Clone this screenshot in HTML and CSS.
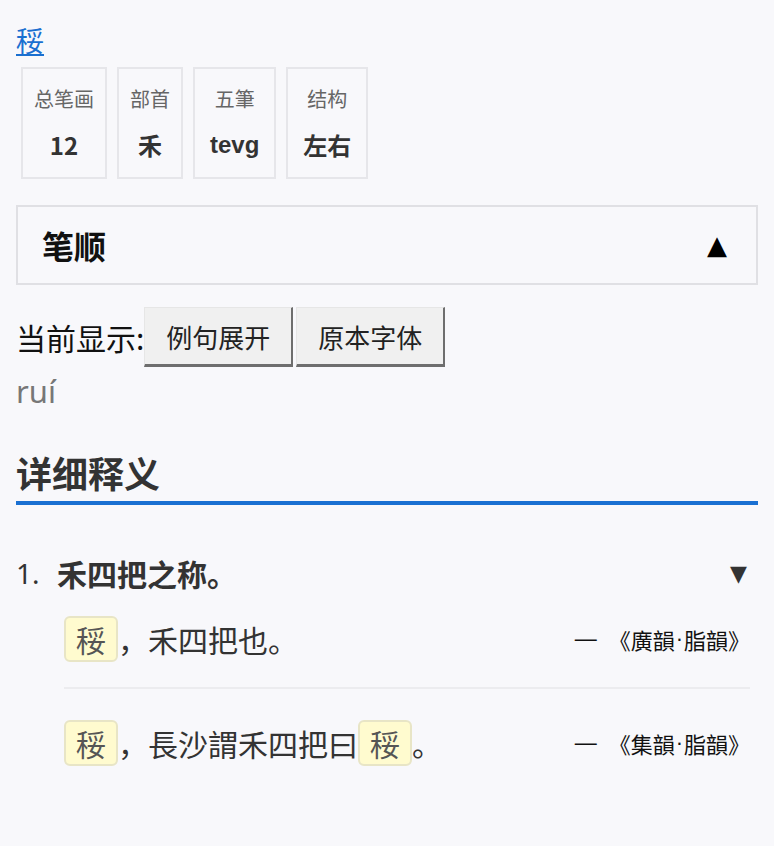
FILE: index.html
```html
<!DOCTYPE html>
<html lang="zh">
<head>
<meta charset="utf-8">
<link rel="stylesheet" href="styles.css">
</head>
<body>
<div class="page">
  <a class="char-link" href="#">䅑</a>
  <div class="cards">
    <div class="card"><div class="card-label">总笔画</div><div class="card-value">12</div></div>
    <div class="card"><div class="card-label">部首</div><div class="card-value">禾</div></div>
    <div class="card"><div class="card-label">五筆</div><div class="card-value latin">tevg</div></div>
    <div class="card"><div class="card-label">结构</div><div class="card-value">左右</div></div>
  </div>
  <div class="stroke-box">
    <span class="stroke-title">笔顺</span>
    <span class="stroke-arrow">▲</span>
  </div>
  <div class="display-row">
    <span class="display-label">当前显示:</span><button class="btn">例句展开</button><button class="btn">原本字体</button>
  </div>
  <div class="pinyin">ruí</div>
  <h2 class="section-title">详细释义</h2>
  <div class="def-row">
    <span class="def-num">1.</span>
    <span class="def-text">禾四把之称。</span>
    <span class="def-arrow">▼</span>
  </div>
  <div class="examples">
    <div class="example">
      <div class="ex-text"><span class="hl">䅑</span>，禾四把也。</div>
      <div class="ex-src"><span class="dash">—</span>《廣韻<span class="dot">·</span>脂韻》</div>
    </div>
    <div class="example">
      <div class="ex-text"><span class="hl">䅑</span>，長沙謂禾四把曰<span class="hl">䅑</span>。</div>
      <div class="ex-src"><span class="dash">—</span>《集韻<span class="dot">·</span>脂韻》</div>
    </div>
  </div>
</div>
</body>
</html>
```
FILE: styles.css
```css
* { box-sizing: border-box; }
html, body { margin: 0; padding: 0; }
body {
  background: #f8f8fb;
  color: #333;
  font-family: "Noto Sans CJK SC", "Noto Sans", sans-serif;
}
.page {
  padding: 22px 16px 0 16px;
}
.char-link {
  display: inline-block;
  font-size: 28px;
  line-height: 36px;
  color: #1a6fd0;
  text-decoration: underline;
}
.cards {
  display: flex;
  margin-top: 9px;
}
.card {
  margin: 0 5px;
  padding: 15px 11px 14px;
  border: 2px solid #e6e6ea;
  display: flex;
  flex-direction: column;
  align-items: center;
  gap: 13px;
}
.card-label {
  font-size: 20px;
  line-height: 30px;
  color: #666;
}
.card-value {
  font-size: 24px;
  line-height: 36px;
  font-weight: bold;
  color: #333;
  padding: 0 4px;
}
.card-value.latin {
  font-family: "Liberation Sans", "Noto Sans", sans-serif;
}
.stroke-box {
  margin-top: 26px;
  height: 80px;
  border: 2px solid #e0e0e4;
  display: flex;
  align-items: center;
  justify-content: space-between;
  padding: 0 29px 0 24px;
}
.stroke-title {
  font-size: 32px;
  font-weight: bold;
  color: #111;
}
.stroke-arrow {
  font-size: 26px;
  color: #000;
  font-family: "DejaVu Sans", sans-serif;
}
.display-row {
  margin-top: 22px;
  display: flex;
  align-items: center;
}
.display-label {
  font-size: 30px;
  color: #111;
}
.btn {
  height: 60px;
  padding: 0 21px 0 21px;
  font-family: "Noto Sans CJK SC", sans-serif;
  font-size: 26px;
  color: #222;
  background: #f0f0f0;
  border-top: 1px solid #e6e6e6;
  border-left: 1px solid #e6e6e6;
  border-right: 2px solid #6e6e6e;
  border-bottom: 3px solid #6e6e6e;
  margin-right: 3px;
}
.pinyin {
  font-size: 31px;
  line-height: 40px;
  color: #777;
  margin-top: 4px;
  font-family: "Noto Sans", sans-serif;
}
.section-title {
  margin: 39px 0 0 0;
  font-size: 36px;
  line-height: 44px;
  font-weight: bold;
  color: #333;
  padding-bottom: 7px;
  border-bottom: 4px solid #1a70d2;
}
.def-row {
  margin-top: 48px;
  display: flex;
  align-items: center;
  height: 40px;
  padding-right: 11px;
}
.def-num {
  font-size: 28px;
  width: 41px;
  font-family: "Noto Sans", sans-serif;
}
.def-text {
  font-size: 30px;
  font-weight: bold;
  flex: 1;
}
.def-arrow {
  font-size: 22px;
  font-family: "DejaVu Sans", sans-serif;
}
.examples {
  margin: 23px 8px 0 48px;
}
.example {
  display: flex;
  align-items: center;
  justify-content: space-between;
  padding: 0 0 25px;
}
.example + .example {
  border-top: 2px solid #ececef;
  padding-top: 31px;
}
.ex-text {
  font-size: 30px;
  line-height: 46px;
  color: #333;
}
.hl {
  display: inline-block;
  background: #fffbcf;
  border: 2px solid #e8e5c6;
  border-radius: 6px;
  padding: 0 10px;
  line-height: 42px;
  color: #555;
}
.ex-src {
  font-size: 22px;
  color: #111;
  display: flex;
  align-items: center;
}
.dash {
  font-family: "Liberation Sans", sans-serif;
  margin-right: 12px;
}
.dot {
  font-family: "Liberation Sans", sans-serif;
  margin: 0 1px;
}
```
